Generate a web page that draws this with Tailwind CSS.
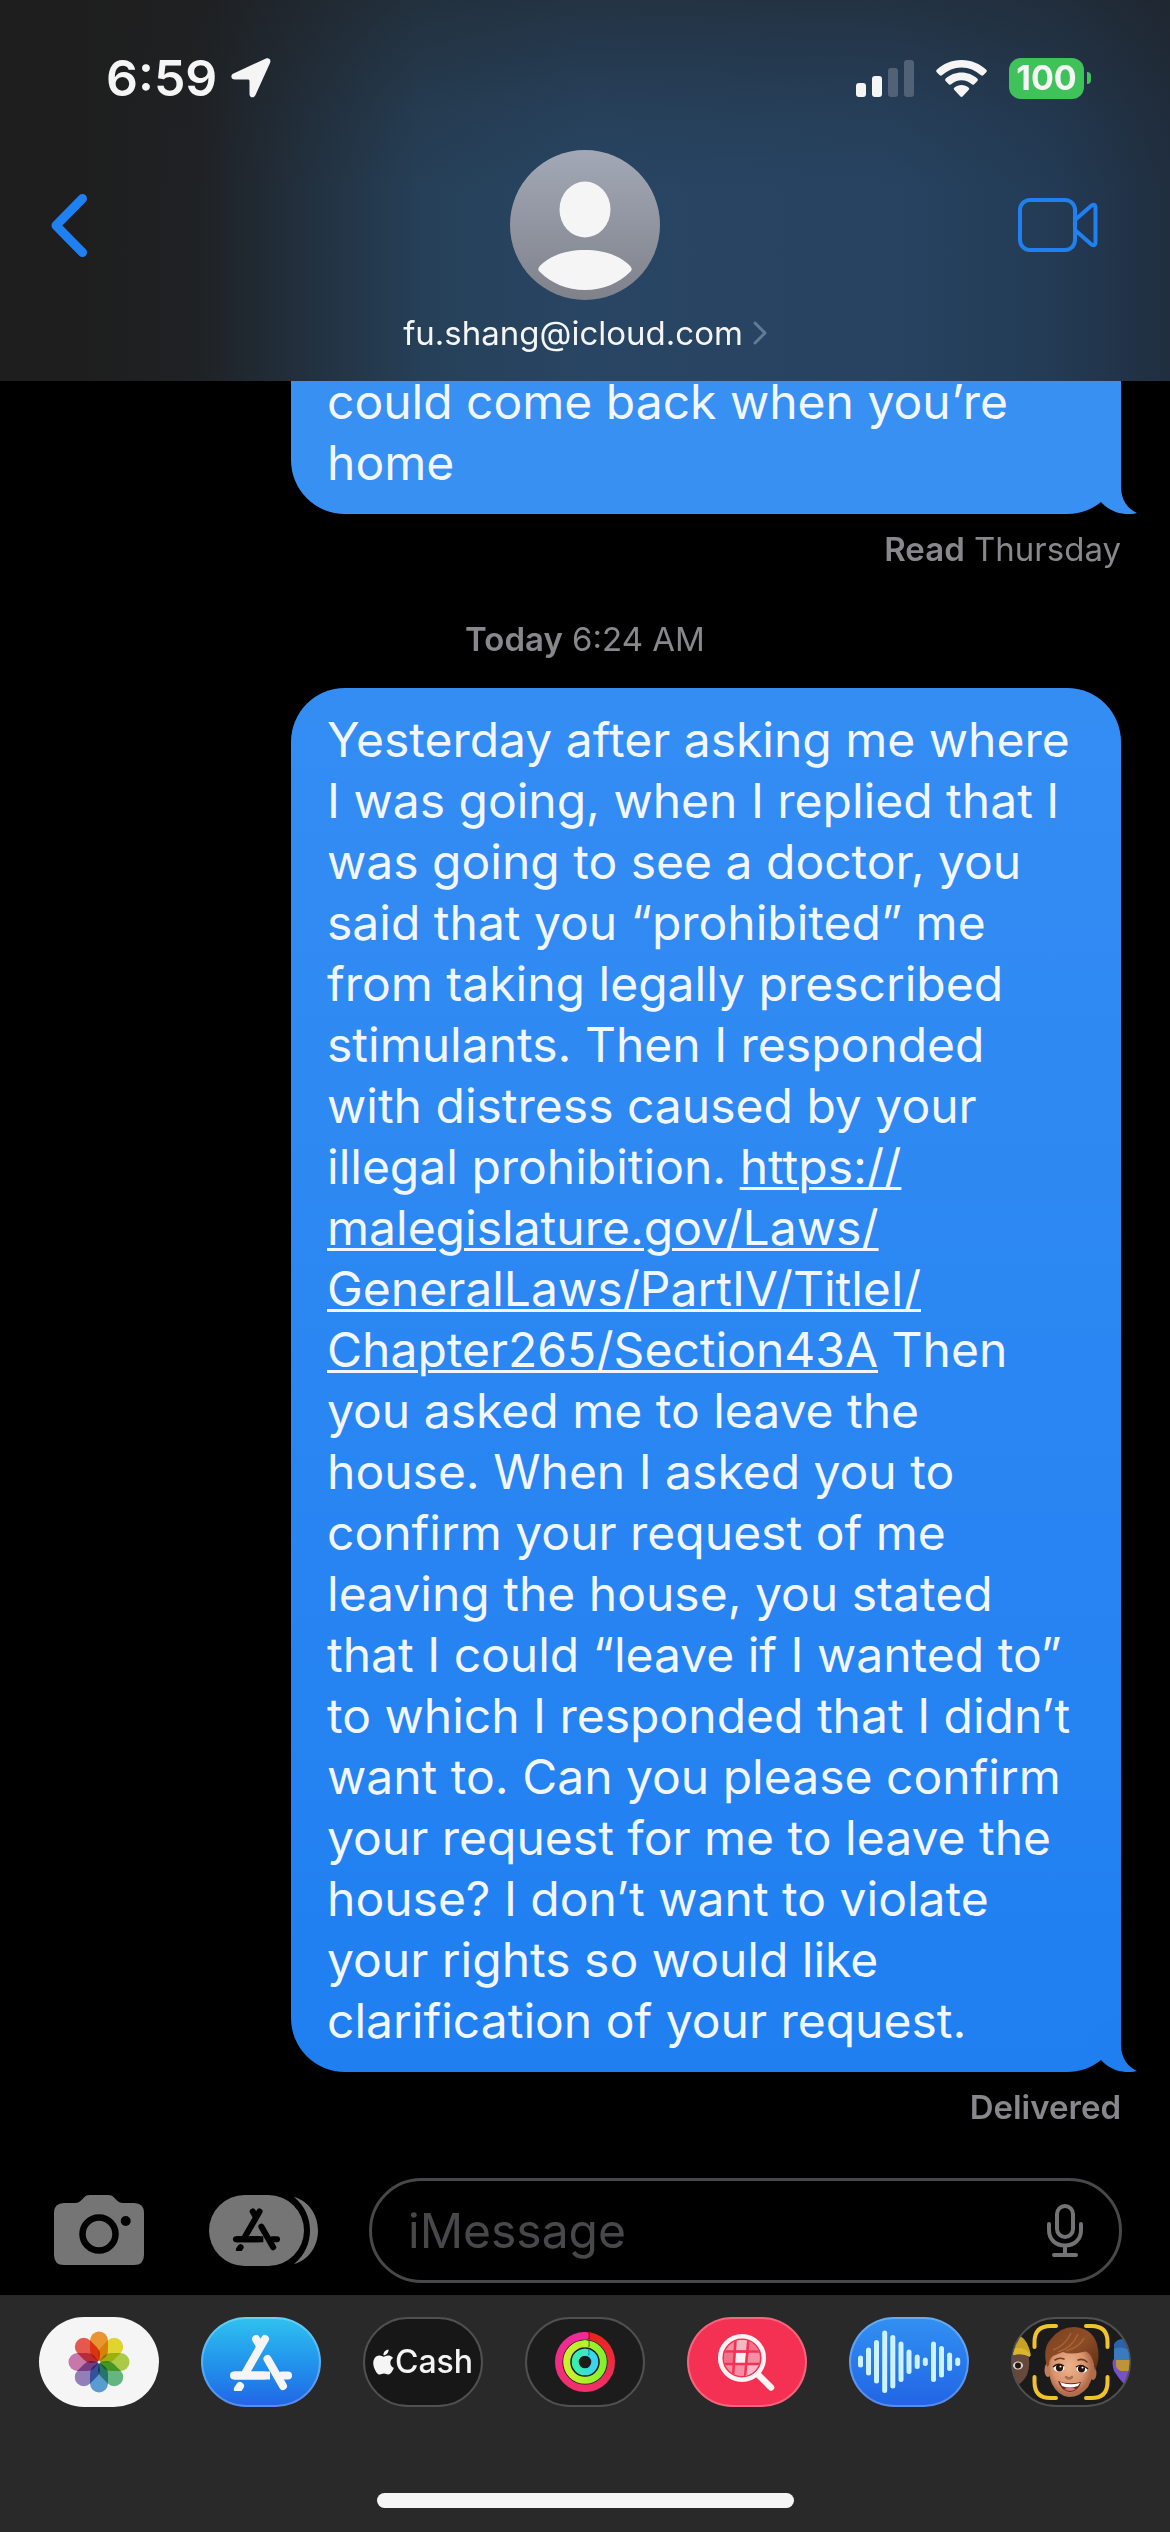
<!DOCTYPE html>
<html lang="en">
<head>
<meta charset="utf-8">
<meta name="viewport" content="width=device-width, initial-scale=1">
<title>Messages</title>
<script src="https://cdn.jsdelivr.net/npm/@tailwindcss/browser@4"></script>
</head>
<body class="bg-black">
<svg class="hidden" aria-hidden="true">
  <symbol id="app-store" viewBox="0 0 64 58">
    <g fill="none" stroke="currentColor" stroke-width="8" stroke-linecap="round">
      <path d="M36 6 17 39M27 6l4 7"/><path d="M38.500 26 54 53"/><path d="M5 42.500h36" stroke-linecap="butt"/><path d="M5 42.500h30"/><path d="M53 42.500h6"/><path d="M11 53l-2 3"/>
    </g>
  </symbol>
  <symbol id="tail" viewBox="0 0 56 60">
    <path d="M40 0V33C40 46 47 55 56 59C44 62 30 59 20 48L5 25Z" fill="currentColor"/>
  </symbol>
</svg>
<div class="flex h-dvh flex-col overflow-hidden bg-black font-[Inter,sans-serif] text-[#f5f5f5]">

  <header class="flex h-[381px] shrink-0 flex-col bg-[linear-gradient(180deg,rgba(30,30,30,0.45)_0%,rgba(30,30,30,0.12)_30%,rgba(30,30,30,0)_50%),linear-gradient(90deg,#1e1e1e_7%,#1f2225_17%,#22303e_26%,#264058_36%,#284563_50%,#274361_76%,#233b55_90%,#202e3f_100%)]">
    <div class="flex h-[150px] items-center justify-between pt-1.5 pr-[79px] pl-[106px]">
      <div class="flex items-center gap-3.5">
        <time class="text-[50px] leading-none font-semibold">6:59</time>
        <svg class="h-10 w-10" viewBox="0 0 40 40" fill="#f5f5f5"><path d="M35 .5C38 -.5 40.500 2 39 5L24.500 37C23 40.500 18.500 40 18.500 36V23.500C18.500 22 18 21.500 16.500 21.500H4C0 21.500 -1 17 2.500 15.500Z"/></svg>
      </div>
      <div class="flex items-center gap-[22px]">
        <svg class="h-[37px] w-[58px]" viewBox="0 0 58 37" fill="#f5f5f5"><rect y="23" width="10" height="14" rx="3"/><rect x="16" y="16" width="10" height="21" rx="3"/><g fill="#516176"><rect x="32" y="8" width="10" height="29" rx="3"/><rect x="48" width="10" height="37" rx="3"/></g></svg>
        <svg class="h-[37px] w-[51px]" viewBox="0 0 51 37" fill="#f5f5f5"><path d="M25.500 0C35.500 0 44 4 50 9.500 51.200 10.600 51 11.500 50 12.500L47.500 15C46.500 16 45.700 15.900 44.700 15 39.500 10.500 33 7.500 25.500 7.500S11.500 10.500 6.300 15C5.300 15.900 4.500 16 3.500 15L1 12.500C0 11.500 -.2 10.600 1 9.500 7 4 15.500 0 25.500 0Z"/><path d="M25.500 12.500C31.500 12.500 37 14.800 41 18.300 42.200 19.400 42.100 20.300 41.200 21.200L38.200 24.200C37.200 25 36.500 24.900 35.500 24.100 32.800 21.700 29.500 20.200 25.500 20.200S18.200 21.700 15.500 24.100C14.500 24.900 13.800 25 12.800 24.200L9.800 21.200C8.900 20.300 8.800 19.400 10 18.300 14 14.800 19.500 12.500 25.500 12.500Z"/><path d="M25.500 25C28.200 25 30.700 26 32.500 27.500 33.500 28.400 33.500 29.100 32.600 30L26.800 36.200C26 37.100 25 37.100 24.200 36.200L18.400 30C17.500 29.100 17.500 28.400 18.500 27.500 20.300 26 22.800 25 25.500 25Z"/></svg>
        <div class="flex items-center gap-[3px]">
          <span class="flex h-[41px] w-[75px] items-center justify-center rounded-xl bg-[#40c25b] text-[34px] leading-none font-bold">100</span>
          <span class="h-3 w-1 rounded-r-full bg-[#40c25b]"></span>
        </div>
      </div>
    </div>
    <nav class="grid grid-cols-[1fr_auto_1fr] items-start">
      <button class="flex h-[150px] w-28 items-center pl-[51px] text-[#1f80f2]" aria-label="Back"><svg class="h-[63px] w-9 shrink-0" viewBox="0 0 36 63" fill="none" stroke="currentColor" stroke-width="9" stroke-linecap="round" stroke-linejoin="round"><path d="M31.500 4.500 5 31.500 31.500 58.500"/></svg></button>
      <button class="flex flex-col items-center gap-2.5">
        <svg class="h-[150px] w-[150px]" viewBox="0 0 150 150"><defs><linearGradient id="avatar" x2="0" y2="1"><stop stop-color="#a3a8b6"/><stop offset="1" stop-color="#7f828b"/></linearGradient></defs><circle cx="75" cy="75" r="75" fill="url(#avatar)"/><ellipse cx="75" cy="59.500" rx="25.500" ry="28" fill="#f5f5f5"/><path d="M30 122C26 118.500 30 116 33 113 44 104 59 100 75 100S106 104 117 113C120 116 124 118.500 120 122 109 133 93 140 75 140S41 133 30 122Z" fill="#f5f5f5"/></svg>
        <span class="flex items-center gap-2.5 text-[33px] leading-[46px]">fu.shang@icloud.com<svg class="h-6 w-3.5" viewBox="0 0 14 24" fill="none" stroke="#637b95" stroke-width="3" stroke-linecap="round" stroke-linejoin="round"><path d="M2 2 12 12 2 22"/></svg></span>
      </button>
      <button class="flex h-[150px] items-center justify-self-end pr-[72px] text-[#1f80f2]" aria-label="FaceTime"><svg class="h-[54px] w-[80px]" viewBox="0 0 80 54" fill="none" stroke="currentColor" stroke-width="4" stroke-linejoin="round"><rect x="2" y="2" width="55" height="50" rx="10"/><path d="M57 22 73.500 7.500Q77.500 5.500 77.500 9.500V44.500Q77.500 48.500 73.500 46.500L57 32"/></svg></button>
    </nav>
  </header>

  <main class="flex min-h-0 flex-1 flex-col justify-end overflow-hidden px-[49px] pb-12">
    <p class="relative ml-auto w-[830px] max-w-full shrink-0 rounded-b-[54px] bg-[#3890f3] py-[21px] pr-6 pl-9 text-[48px] leading-[61px] text-[#f2f7fe]">could come back when you’re<br>home<svg class="absolute -right-4 bottom-0 h-[60px] w-14 text-[#3890f3]"><use href="#tail"/></svg></p>
    <p class="mt-3 mb-11 text-right text-[33px] leading-[46px] text-[#87878c]"><b class="font-semibold">Read</b> Thursday</p>
    <p class="mb-[26px] text-center text-[33px] leading-[46px] text-[#87878c]"><b class="font-semibold">Today</b> 6:24 AM</p>
    <p class="relative ml-auto w-[830px] max-w-full shrink-0 rounded-[54px] bg-linear-to-b from-[#348df3] to-[#1f7ff1] py-[21px] pr-6 pl-9 text-[48px] leading-[61px] text-[#f2f7fe]">Yesterday after asking me where<br>I was going, when I replied that I<br>was going to see a doctor, you<br>said that you “prohibited” me<br>from taking legally prescribed<br>stimulants. Then I responded<br>with distress caused by your<br>illegal prohibition. <a class="underline decoration-3 underline-offset-3" href="https://malegislature.gov/Laws/GeneralLaws/PartIV/TitleI/Chapter265/Section43A">https://<br>malegislature.gov/Laws/<br>GeneralLaws/PartIV/TitleI/<br>Chapter265/Section43A</a> Then<br>you asked me to leave the<br>house. When I asked you to<br>confirm your request of me<br>leaving the house, you stated<br>that I could “leave if I wanted to”<br>to which I responded that I didn’t<br>want to. Can you please confirm<br>your request for me to leave the<br>house? I don’t want to violate<br>your rights so would like<br>clarification of your request.<svg class="absolute -right-4 bottom-0 h-[60px] w-14 text-[#1f7ff1]"><use href="#tail"/></svg></p>
    <p class="mt-3 text-right text-[33px] leading-[46px] font-semibold text-[#87878c]">Delivered</p>
  </main>

  <form class="flex shrink-0 items-center pr-12 pb-3 pl-[54px]">
    <button type="button" aria-label="Camera"><svg class="h-[71px] w-[90px]" viewBox="0 0 90 71"><path d="M10 8H21C24 8 25.500 7 27.500 5L30 2.500C32 .7 33 0 36 0H54C57 0 58 .7 60 2.500L62.500 5C64.500 7 66 8 69 8H80Q90 8 90 18V60Q90 70 80 70H10Q0 70 0 60V18Q0 8 10 8Z" fill="#757575"/><circle cx="45" cy="39" r="16.500" fill="none" stroke="#000" stroke-width="6.500"/><circle cx="71.700" cy="26" r="5" fill="#000"/></svg></button>
    <button type="button" class="ml-[65px]" aria-label="Apps"><svg class="h-[71px] w-[109px]" viewBox="0 0 109 71"><path d="M85 2C100 6 109 20 109 35.500S100 65 85 69C96 60 101 48 101 35.500S96 11 85 2Z" fill="#757575"/><rect width="95" height="71" rx="35.500" fill="#757575"/><svg x="23" y="12" width="49" height="44" class="text-black"><use href="#app-store"/></svg></svg></button>
    <label class="ml-[51px] flex h-[105px] min-w-0 flex-1 items-center rounded-full border-3 border-[#48484b] pr-9 pl-9">
      <input class="min-w-0 flex-1 bg-transparent text-[48px] leading-[61px] outline-none placeholder:text-[#48484b]" type="text" placeholder="iMessage" aria-label="iMessage">
      <svg class="h-[54px] w-9" viewBox="0 0 36 54" fill="none" stroke="#737375" stroke-width="4" stroke-linecap="round"><rect x="10" y="2" width="16" height="31" rx="8"/><path d="M2 20V26C2 36 9 41.500 18 41.500S34 36 34 26V20M18 42V51M7 51H29"/></svg>
    </label>
  </form>

  <footer class="flex h-[237px] shrink-0 flex-col items-center justify-between bg-[#292929] pt-[22px] pb-6">
    <div class="flex w-full justify-between px-[39px]">
      <button class="h-[90px] w-[120px] rounded-full bg-[#f5f5f5]" aria-label="Photos">
        <svg class="h-[90px] w-[120px]" viewBox="0 0 120 90"><defs><path id="petal" d="M0 0 -6.500 -5Q-9 -7.500 -9 -12V-21.500A9 9 0 0 1 9 -21.500V-12Q9 -7.500 6.500 -5Z"/></defs><g transform="translate(60 45)" class="*:mix-blend-multiply"><use href="#petal" fill="#f39b34"/><use href="#petal" fill="#eadd30" transform="rotate(45)"/><use href="#petal" fill="#b2d34a" transform="rotate(90)"/><use href="#petal" fill="#68bd84" transform="rotate(135)"/><use href="#petal" fill="#5ea3da" transform="rotate(180)"/><use href="#petal" fill="#9883c1" transform="rotate(225)"/><use href="#petal" fill="#cd7db0" transform="rotate(270)"/><use href="#petal" fill="#ee5b52" transform="rotate(315)"/></g><circle cx="60" cy="45" r="1.500" fill="#fff"/></svg>
      </button>
      <button class="flex h-[90px] w-[120px] items-center justify-center rounded-full border-2 border-white/25 bg-linear-to-b from-[#31c2f0] to-[#2364e5] bg-origin-border" aria-label="App Store"><svg class="h-[58px] w-16 text-[#f5f5f5]"><use href="#app-store"/></svg></button>
      <button class="flex h-[90px] w-[120px] items-center justify-center gap-px rounded-full border-2 border-[#505050] bg-[#171717] text-[32px] leading-none font-medium"><svg class="h-[26px] w-[21px] shrink-0" viewBox="2 0 20 24" fill="#f5f5f5"><path d="M12.152 6.896c-.948 0-2.415-1.078-3.960-1.040-2.040.027-3.910 1.183-4.961 3.014-2.117 3.675-.546 9.103 1.519 12.090 1.013 1.454 2.208 3.090 3.792 3.039 1.520-.065 2.090-.987 3.935-.987 1.831 0 2.350.987 3.960.948 1.637-.026 2.676-1.480 3.676-2.948 1.156-1.688 1.636-3.325 1.662-3.415-.039-.013-3.182-1.221-3.220-4.857-.026-3.040 2.480-4.494 2.597-4.559-1.429-2.090-3.623-2.324-4.390-2.376-2-.156-3.675 1.090-4.610 1.090zM15.530 3.830c.843-1.012 1.400-2.427 1.245-3.830-1.207.052-2.662.805-3.532 1.818-.780.896-1.454 2.338-1.273 3.714 1.338.104 2.715-.688 3.559-1.701"/></svg>Cash</button>
      <button class="flex h-[90px] w-[120px] items-center justify-center rounded-full border-2 border-[#505050] bg-[#1c1c1c]" aria-label="Fitness">
        <svg class="h-[60px] w-[60px]" viewBox="0 0 60 60"><defs><linearGradient id="r1" x2="0" y2="1"><stop stop-color="#ef2a9a"/><stop offset="1" stop-color="#f0306a"/></linearGradient><linearGradient id="r1b" x2="0" y2="1"><stop stop-color="#e8261c"/><stop offset="1" stop-color="#f0306a"/></linearGradient><linearGradient id="r2" x1="0" x2="1"><stop stop-color="#cdf02c"/><stop offset="1" stop-color="#86f02c"/></linearGradient><linearGradient id="r3" x1="0" x2="1"><stop stop-color="#3aefae"/><stop offset="1" stop-color="#3bd3f5"/></linearGradient></defs><g fill="none"><path d="M30 3.700A26.300 26.300 0 0 1 30 56.300" stroke="url(#r1b)" stroke-width="7.400"/><path d="M30 56.300A26.300 26.300 0 0 1 30 3.700" stroke="url(#r1)" stroke-width="7.400"/><circle cx="30" cy="30" r="18.300" stroke="url(#r2)" stroke-width="7"/><circle cx="30" cy="30" r="9.800" stroke="url(#r3)" stroke-width="7"/><g stroke-linecap="round"><path d="M34 1.500V6.500" stroke="#a9151c" stroke-width="2"/><path d="M34 10V14" stroke="#4fae20" stroke-width="2"/><path d="M33.500 18.500V22.500" stroke="#218fb0" stroke-width="2"/></g></g><circle cx="30" cy="3.700" r="3.700" fill="#ef2a9a"/><circle cx="30" cy="11.700" r="3.500" fill="#c0f02c"/><circle cx="30" cy="20.200" r="3.500" fill="#3be8c4"/></svg>
      </button>
      <button class="h-[90px] w-[120px] rounded-full border-2 border-white/25 bg-[#f43053] bg-origin-border" aria-label="#images">
        <svg class="-m-0.5 h-[90px] w-[120px]" viewBox="0 0 120 90"><defs><clipPath id="lens"><circle cx="55" cy="41" r="18"/></clipPath></defs><g clip-path="url(#lens)"><rect x="37" y="23" width="36" height="36" fill="#f58fa3"/><path d="M50 22H60L59 33H49Z" fill="#f9b6c4"/><path d="M37 36H46V46H36ZM62 23H73V33H61Z" fill="#f2728c"/><path d="M49 36H59L58 46H48Z" fill="#fdeef1"/><path d="M60 48H73V60H58Z" fill="#f9b6c4"/><path d="M36 34.500H74M36 47H74M48.500 22 46 60M61.500 22 58 60" stroke="#f43053" stroke-width="2.500"/></g><circle cx="55" cy="41" r="21.800" fill="none" stroke="#fcf3f5" stroke-width="4.500"/><path d="M71 57.500 84 70.500" stroke="#fcf3f5" stroke-width="6.500" stroke-linecap="round"/></svg>
      </button>
      <button class="h-[90px] w-[120px] rounded-full border-2 border-white/25 bg-linear-to-b from-[#3390f2] to-[#2264e5] bg-origin-border" aria-label="Audio">
        <svg class="-m-0.5 h-[90px] w-[120px]" viewBox="0 0 120 90" stroke="#cdf3ff" stroke-width="5" stroke-linecap="round"><path d="M11.500 41V48M19.500 33V56M27.500 25.500V64M35.700 16V73.500M43.800 20.500V69M52 27V62.500M60 35V54.500M68.200 40V49.500M76.300 43V46.500M84.500 27V62.500M92.500 31.500V58M100.600 38V51.500M108.700 43V46.500"/></svg>
      </button>
      <button class="h-[90px] w-[120px] rounded-full border-2 border-[#505050] bg-[#1b1b1b] bg-origin-border" aria-label="Memoji">
        <svg class="-m-0.5 h-[90px] w-[120px]" viewBox="0 0 120 90"><defs><clipPath id="pill"><rect x="1.500" y="1.500" width="117" height="87" rx="43.500"/></clipPath><linearGradient id="hair" x2="1" y2="1"><stop stop-color="#7a4021"/><stop offset=".5" stop-color="#8f4d27"/><stop offset="1" stop-color="#5c2d17"/></linearGradient><radialGradient id="skin" cx=".45" cy=".45"><stop stop-color="#eeb38c"/><stop offset=".7" stop-color="#d9956f"/><stop offset="1" stop-color="#b06c4b"/></radialGradient></defs>
        <g clip-path="url(#pill)"><path d="M0 36H17Q20 48 16 58 12 65 7 68H0Z" fill="#66493a"/><path d="M0 18H8Q18 24 20 39 10 34 0 39Z" fill="#c6a126"/><path d="M0 32Q12 29 19 36V40Q10 35 0 39Z" fill="#dbb62c"/><ellipse cx="7" cy="48.500" rx="5" ry="4" fill="#ddd5cf"/><circle cx="7" cy="48.500" r="3" fill="#211713"/>
        <path d="M103 42Q100 44 103 54 108 62 114 68H120V30Z" fill="#7652c4"/><path d="M103 42V27Q106 22 112 22H120V44Z" fill="#2c62ab"/><path d="M103 32Q110 28 120 34V43H103Z" fill="#397bbd"/><path d="M105 43H119V54H110Q106 53 105 49Z" fill="#bd9438"/></g>
        <g fill="none" stroke="#f0c32d" stroke-width="4" stroke-linecap="round"><path d="M23.500 30V25Q23.500 9 39.500 9H45M75 9H80.500Q96.500 9 96.500 25V30M23.500 60V65Q23.500 81 39.500 81H45M75 81H80.500Q96.500 81 96.500 65V60"/></g>
        <ellipse cx="37" cy="53" rx="3.500" ry="7" fill="#c17c59"/><ellipse cx="82" cy="56" rx="3.500" ry="7" fill="#b06c4b"/><path d="M37 38Q40 24 60 24T83 40Q84 58 77 70 69 80 58 80 47 79 41 67 37 58 37 38Z" fill="url(#skin)"/><path d="M36 50Q31 31 40 22 49 10 63 10 81 11 86 27 90 41 84 54 83 45 80 39 76 33 72 35 58 38 52 35L42 39Q38 42 38 48Z" fill="url(#hair)"/><path d="M42 33Q54 29 60 16M47 35Q61 31 67 17M55 34Q69 30 73 21" fill="none" stroke="#ad6839" stroke-width="1.200"/><path d="M44 43Q48 40 53 42M67 43Q72 41 76 45" fill="none" stroke="#713c20" stroke-width="1.600" stroke-linecap="round"/><ellipse cx="48" cy="51" rx="5.500" ry="3.800" fill="#fff"/><ellipse cx="71" cy="52" rx="5.500" ry="3.800" fill="#fff"/><circle cx="48.500" cy="50.800" r="3.600" fill="#24150e"/><circle cx="70.500" cy="51.800" r="3.600" fill="#24150e"/><circle cx="49.500" cy="49.500" r="1" fill="#fff"/><circle cx="71.500" cy="50.500" r="1" fill="#fff"/><path d="M42 50Q47 45 53 49M65 50Q71 46 77 52" fill="none" stroke="#24150e" stroke-width="1.300"/><path d="M55 60Q58 63 61 60" fill="none" stroke="#b06d4a" stroke-width="2.500" stroke-linecap="round"/><path d="M47 64Q57 68 70 65 68 74 59 75 50 74 47 64Z" fill="#6e2520"/><path d="M49 65Q58 69 69 66L67 69Q58 72 51 69Z" fill="#fff"/><path d="M53 72Q59 69 65 72 59 76 53 72Z" fill="#d67775"/></svg>
      </button>
    </div>
    <div class="h-[15px] w-[417px] rounded-full bg-[#f5f5f5]"></div>
  </footer>
</div>
</body>
</html>
